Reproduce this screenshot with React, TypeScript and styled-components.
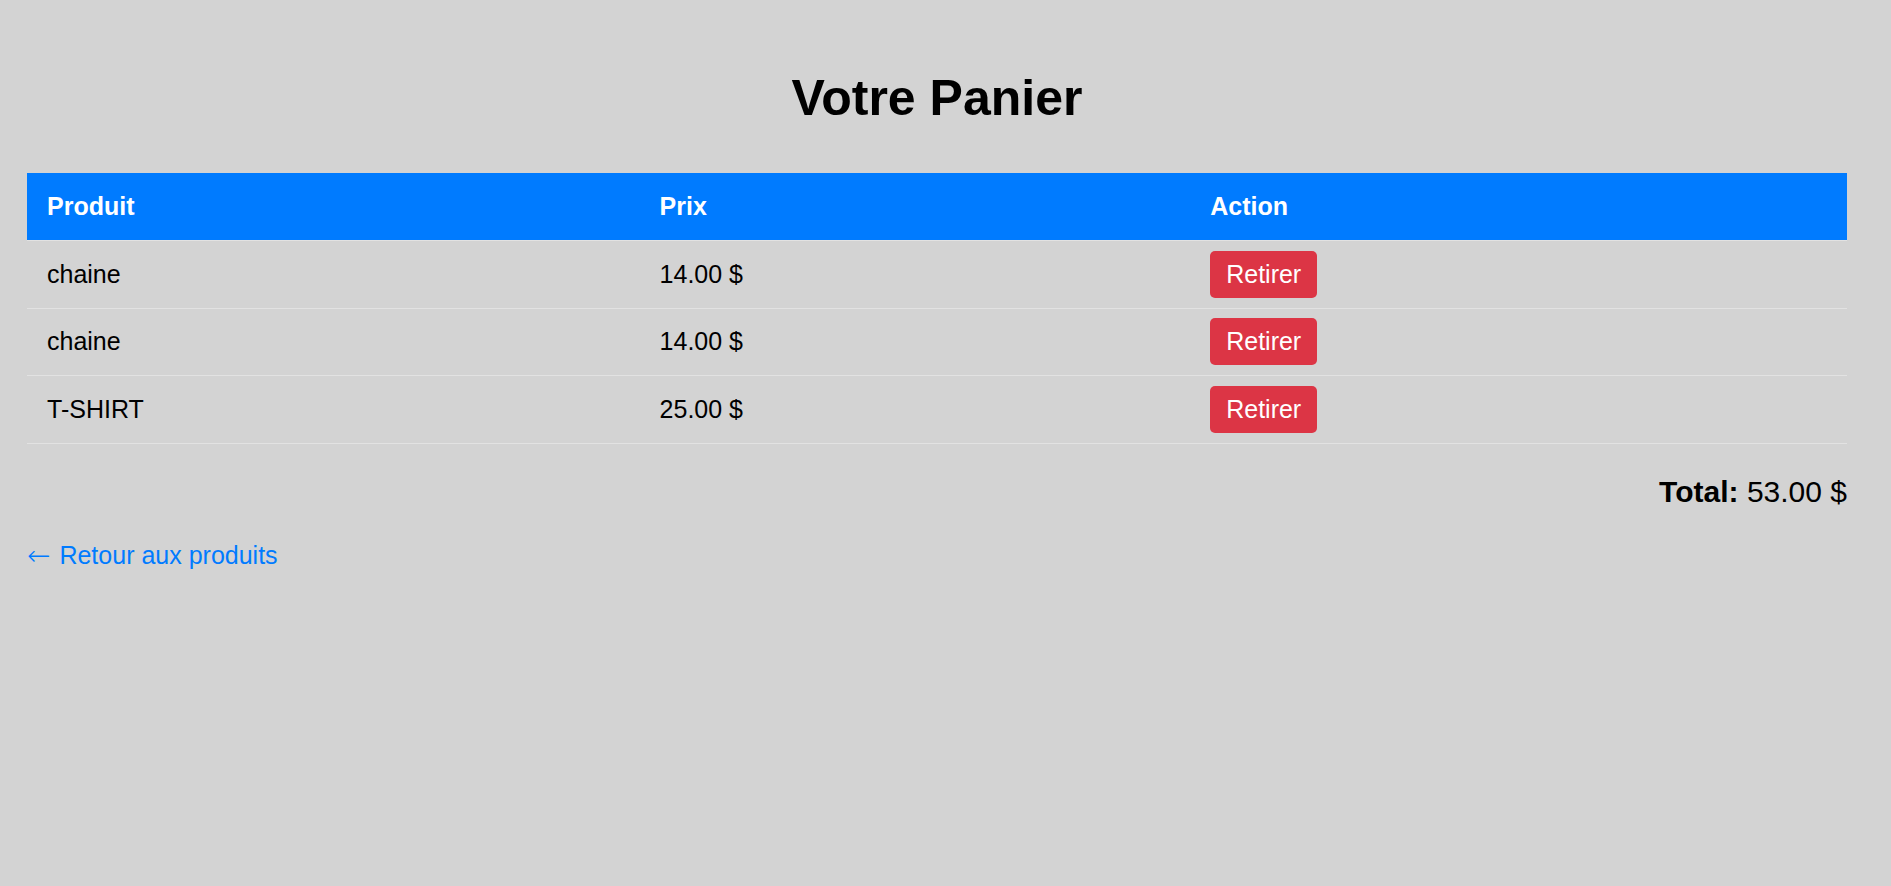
import React from "react";
import styled, { createGlobalStyle } from "styled-components";

const GlobalStyle = createGlobalStyle`
  html, body {
    margin: 0;
    padding: 0;
    background: #d3d3d3;
  }
  body {
    font-family: "Liberation Sans", Arial, sans-serif;
    color: #000;
  }
`;

const Page = styled.div`
  min-height: 100vh;
  box-sizing: border-box;
  padding: 69px 44px 40px 27px;
  background: #d3d3d3;
`;

const Title = styled.h1`
  margin: 0 0 46px;
  text-align: center;
  font-size: 50px;
  font-weight: 700;
  line-height: normal;
`;

const Table = styled.table`
  width: 100%;
  border-collapse: collapse;
  table-layout: fixed;
  font-size: 25px;
`;

const HeadCell = styled.th<{ $w: string }>`
  width: ${(p) => p.$w};
  background: #007bff;
  color: #fff;
  font-weight: 700;
  text-align: left;
  padding: 19px 20px;
  line-height: normal;
  border-bottom: 1px solid #e2e2e2;
`;

const Row = styled.tr`
  border-bottom: 1px solid #e2e2e2;
`;

const Cell = styled.td`
  padding: 9.75px 20px;
  text-align: left;
  vertical-align: middle;
  line-height: normal;
`;

const RemoveButton = styled.button`
  font-family: "Liberation Sans", Arial, sans-serif;
  font-size: 25px;
  line-height: normal;
  color: #fff;
  background: #dc3545;
  border: none;
  border-radius: 5px;
  padding: 9px 16px;
  cursor: pointer;
  display: inline-block;
`;

const Total = styled.div`
  margin-top: 31px;
  text-align: right;
  font-size: 30px;
  line-height: normal;
`;

const BackLink = styled.a`
  display: inline-block;
  margin-top: 32px;
  font-size: 25px;
  line-height: normal;
  color: #007bff;
  text-decoration: none;
`;

const Arrow = styled.span`
  font-family: "DejaVu Sans", sans-serif;
  font-weight: 200;
  font-size: 28px;
  line-height: 1;
  margin-right: 2px;
  position: relative;
  top: 1px;
`;

const items = [
  { name: "chaine", price: 14 },
  { name: "chaine", price: 14 },
  { name: "T-SHIRT", price: 25 },
];

export default function App() {
  const total = items.reduce((s, i) => s + i.price, 0);
  return (
    <>
      <GlobalStyle />
      <Page>
        <Title>Votre Panier</Title>
        <Table>
          <thead>
            <tr>
              <HeadCell $w="33.68%">Produit</HeadCell>
              <HeadCell $w="30.05%">Prix</HeadCell>
              <HeadCell $w="36.27%">Action</HeadCell>
            </tr>
          </thead>
          <tbody>
            {items.map((it, i) => (
              <Row key={i}>
                <Cell>{it.name}</Cell>
                <Cell>{it.price.toFixed(2)} $</Cell>
                <Cell>
                  <RemoveButton>Retirer</RemoveButton>
                </Cell>
              </Row>
            ))}
          </tbody>
        </Table>
        <Total>
          <strong>Total:</strong> {total.toFixed(2)} $
        </Total>
        <BackLink href="#">
          <Arrow>←</Arrow> Retour aux produits
        </BackLink>
      </Page>
    </>
  );
}
